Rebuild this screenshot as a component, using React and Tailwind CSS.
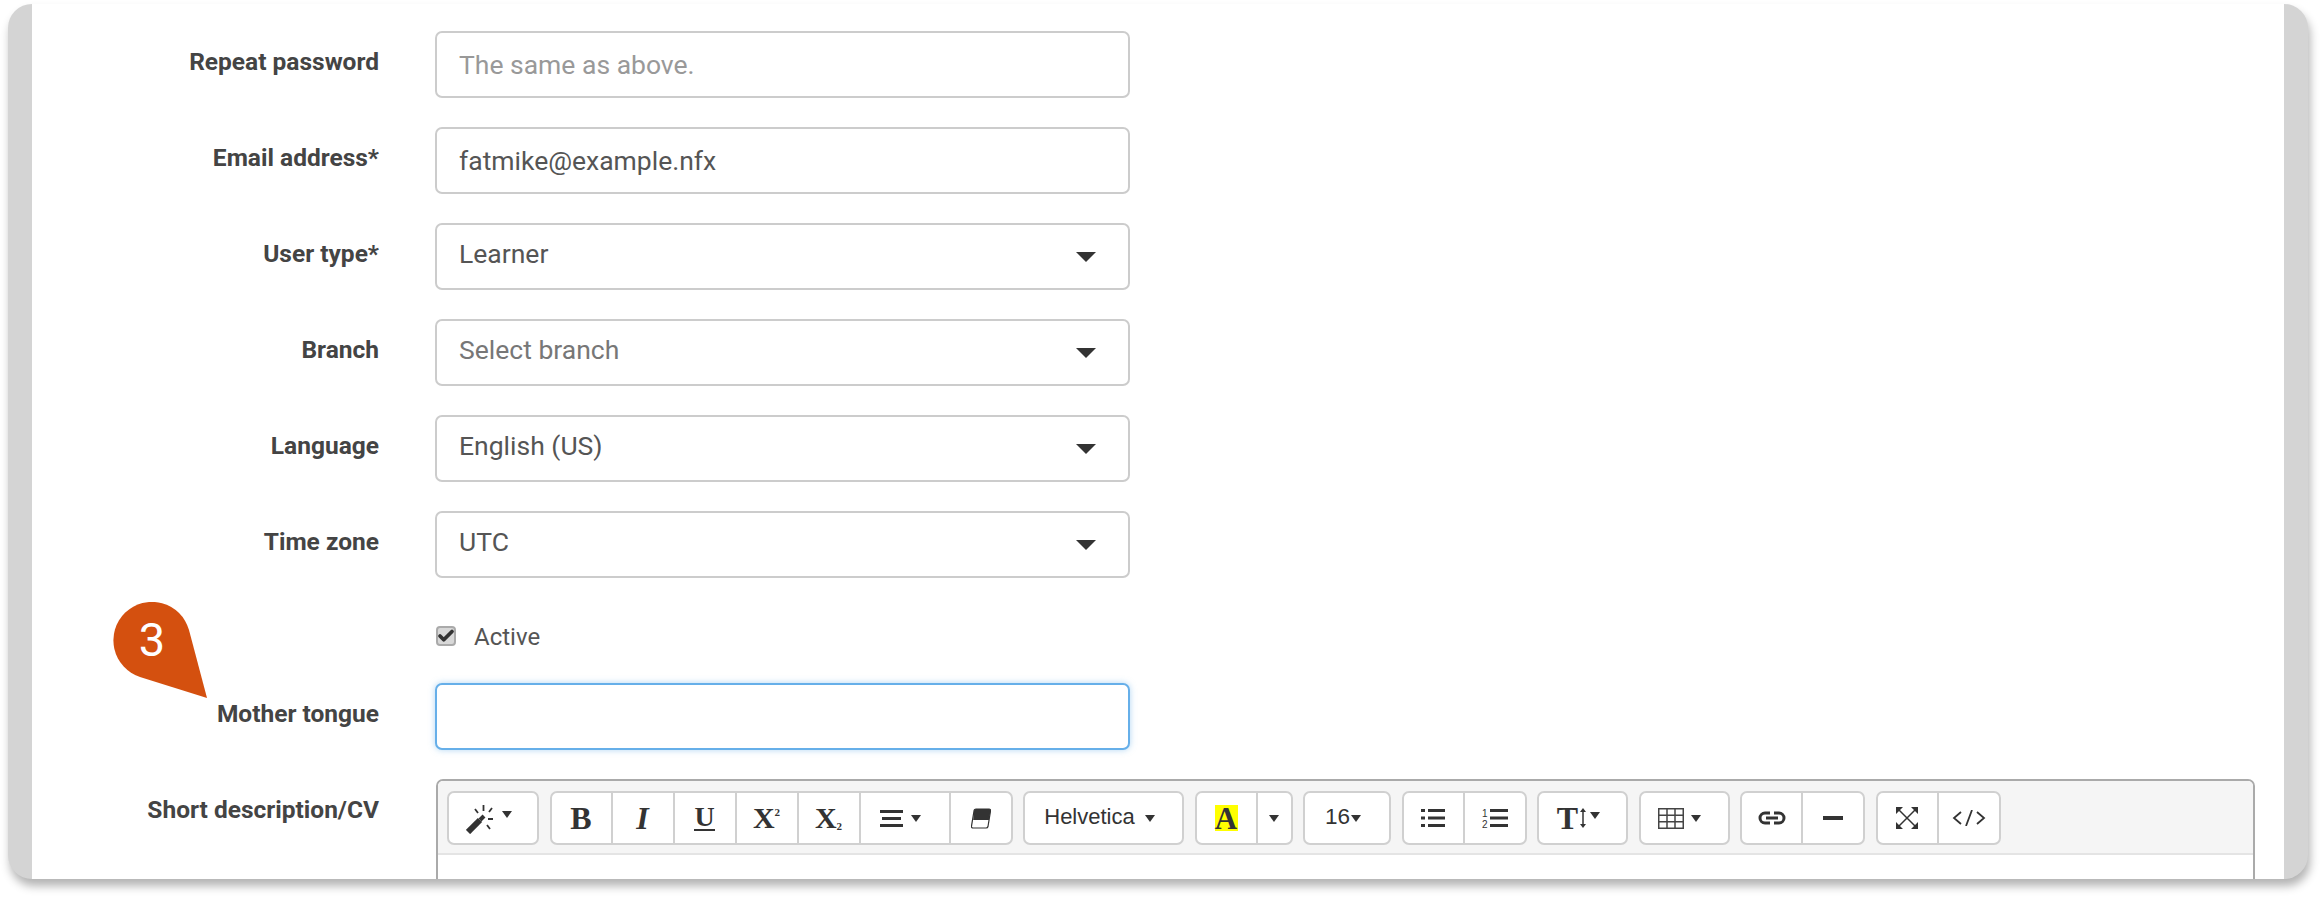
import { Check } from 'lucide-react';

const roboto = "font-['Roboto',sans-serif]";

function Caret({ className = '' }) {
  return (
    <svg width="10" height="7" viewBox="0 0 10 7" className={className}>
      <path d="M0 0h10L5 7z" fill="#333" />
    </svg>
  );
}

function Row({ label, children, className = 'mb-[29px]' }) {
  return (
    <div className={`flex h-[67px] items-center gap-[56px] ${className}`}>
      <label className="w-[347px] pb-[6px] text-right text-[24.5px] font-bold leading-8 text-[#444]">{label}</label>
      {children}
    </div>
  );
}

function TextField({ value, placeholder, focused }) {
  return (
    <input
      readOnly
      value={value}
      placeholder={placeholder}
      className={`h-[67px] w-[695px] rounded-[7px] border-2 bg-white px-[22px] pb-[1px] text-[26.5px] text-[#555] outline-none placeholder:text-[#999] ${
        focused ? 'border-[#66afe9] shadow-[0_0_6px_rgba(102,175,233,0.5)]' : 'border-[#ccc]'
      }`}
    />
  );
}

function SelectField({ value, muted }) {
  return (
    <div className={`flex h-[67px] w-[695px] items-center justify-between rounded-[7px] border-2 border-[#ccc] bg-white pl-[22px] pr-[32px] text-[26.5px] ${muted ? 'text-[#777]' : 'text-[#555]'}`}>
      <span className="pb-[5px]">{value}</span>
      <svg width="20" height="10" viewBox="0 0 20 10">
        <path d="M0 0h20L10 10z" fill="#333" />
      </svg>
    </div>
  );
}

// one segmented block of the editor toolbar
function Group({ children }) {
  return <div className="flex h-[54px] rounded-[7px] border-2 border-[#d0d0d0] bg-white text-[#333]">{children}</div>;
}

function Btn({ w, last, className = 'justify-center', children }) {
  return (
    <div style={{ width: w }} className={`flex shrink-0 items-center ${className} ${last ? '' : 'border-r-2 border-[#d0d0d0]'}`}>
      {children}
    </div>
  );
}

const serif = "font-['Liberation_Serif',serif] font-bold";

function Toolbar() {
  return (
    <div className="flex h-[74px] gap-[10.5px] border-b-2 border-[#e4e4e4] bg-[#f5f5f5] pl-[9px] pt-[10px]">
      <Group>
        <Btn w={88} last className="justify-center pr-2">
          <svg width="28" height="30" viewBox="0 0 28 30" className="mr-[8px] mt-[2px]">
            <path d="M2 28 14 16" stroke="#333" strokeWidth="6" />
            <path d="M14 16 18 12" stroke="#333" strokeWidth="4" />
            <path d="M17.500 1v6M9 5l3 4M26 4l-3 4M22 15h5M21 21l3 4" stroke="#333" strokeWidth="1.800" fill="none" />
          </svg>
          <Caret className="-mt-[8px]" />
        </Btn>
      </Group>
      <Group>
        <Btn w={61}><span className={`${serif} text-[32px] leading-none`}>B</span></Btn>
        <Btn w={62}><span className={`${serif} text-[32px] italic leading-none`}>I</span></Btn>
        <Btn w={62}><span className={`${serif} border-b-2 border-[#333] text-[28px] leading-[24px]`}>U</span></Btn>
        <Btn w={62}>
          <span className={`${serif} text-[30px] leading-none`}>X</span>
          <span className={`${serif} -mt-[12px] text-[11px] leading-none`}>2</span>
        </Btn>
        <Btn w={62}>
          <span className={`${serif} text-[30px] leading-none`}>X</span>
          <span className={`${serif} mt-[16px] text-[11px] leading-none`}>2</span>
        </Btn>
        <Btn w={90} className="justify-center pr-2">
          <svg width="23" height="17" viewBox="0 0 23 17" className="mr-[8px]">
            <path d="M0 0h23v3H0zM2 7h19v3H2zM0 14h23v3H0z" fill="#333" />
          </svg>
          <Caret />
        </Btn>
        <Btn w={60} last>
          <svg width="20" height="21" viewBox="0 0 20 21">
            <path d="M5 1h13a1.500 1.500 0 0 1 1.500 2L17 18.500a2 2 0 0 1-2 1.500H2a1.500 1.500 0 0 1-1.500-2L3 3a2 2 0 0 1 2-2z" fill="#fff" stroke="#333" strokeWidth="1.200" />
            <path d="M5 1h13a1.500 1.500 0 0 1 1.500 2L18 12H2.200L3 3a2 2 0 0 1 2-2z" fill="#333" />
          </svg>
        </Btn>
      </Group>
      <Group>
        <Btn w={157} last className="justify-center pr-2">
          <span className="-mt-[3px] mr-[10px] font-['Liberation_Sans',sans-serif] text-[22px] text-[#333]">Helvetica</span>
          <Caret />
        </Btn>
      </Group>
      <Group>
        <Btn w={61}>
          <span className={`${serif} h-[26px] w-[23px] bg-[#ffff00] text-center text-[31px] leading-[27px]`}>A</span>
        </Btn>
        <Btn w={33} last><Caret /></Btn>
      </Group>
      <Group>
        <Btn w={84} last className="justify-center pr-2">
          <span className="-mt-[3px] font-['Liberation_Sans',sans-serif] text-[22.500px] text-[#333]">16</span>
          <Caret className="ml-[1px]" />
        </Btn>
      </Group>
      <Group>
        <Btn w={61}>
          <svg width="24" height="20" viewBox="0 0 24 20">
            <path d="M0 1h4v3H0zM7 1h17v3H7zM0 8.500h4v3H0zM7 8.500h17v3H7zM0 16h4v3H0zM7 16h17v3H7z" fill="#333" />
          </svg>
        </Btn>
        <Btn w={60} last>
          <svg width="26" height="22" viewBox="0 0 26 22">
            <path d="M8 2h18v3H8zM8 9.500h18v3H8zM8 17h18v3H8z" fill="#333" />
            <text x="0" y="10" fontSize="10" fontFamily="Liberation Sans" fill="#333">1</text>
            <text x="0" y="21" fontSize="10" fontFamily="Liberation Sans" fill="#333">2</text>
          </svg>
        </Btn>
      </Group>
      <Group>
        <Btn w={87} last className="justify-center pr-2">
          <span className={`${serif} text-[32px] leading-none`}>T</span>
          <svg width="8" height="22" viewBox="0 0 8 22" className="ml-[1px] mr-[3px]">
            <path d="M4 3v16" stroke="#333" strokeWidth="1.500" />
            <path d="M1 5l3-4 3 4zM1 17l3 4 3-4z" fill="#333" />
          </svg>
          <Caret className="-mt-[6px]" />
        </Btn>
      </Group>
      <Group>
        <Btn w={87} last className="justify-center pr-[10px]">
          <svg width="26" height="21" viewBox="0 0 26 21" className="mr-[7px]">
            <path d="M.75.750h24.500v19.500H.75zM.75 7.250h24.500M.75 13.750h24.500M9 .750v19.500M17 .750v19.500" fill="none" stroke="#444" strokeWidth="1.500" />
          </svg>
          <Caret />
        </Btn>
      </Group>
      <Group>
        <Btn w={61}>
          <svg width="28" height="14" viewBox="0 0 28 14">
            <path d="M12 2H7a5 5 0 0 0 0 10h5M16 2h5a5 5 0 0 1 0 10h-5M8 7h12" fill="none" stroke="#333" strokeWidth="3" />
          </svg>
        </Btn>
        <Btn w={60} last>
          <svg width="20" height="4" viewBox="0 0 20 4">
            <path d="M0 0h20v4H0z" fill="#333" />
          </svg>
        </Btn>
      </Group>
      <Group>
        <Btn w={61}>
          <svg width="22" height="22" viewBox="0 0 22 22">
            <path d="M3 3 19 19M19 3 3 19" stroke="#333" strokeWidth="1.500" />
            <path d="M0 0h7L0 7zM22 0h-7l7 7zM0 22h7l-7-7zM22 22h-7l7-7z" fill="#333" />
          </svg>
        </Btn>
        <Btn w={60} last>
          <svg width="34" height="16" viewBox="0 0 34 16">
            <path d="M9 2 2 8l7 6M25 2l7 6-7 6M20 0l-6 16" fill="none" stroke="#333" strokeWidth="1.800" />
          </svg>
        </Btn>
      </Group>
    </div>
  );
}

export default function App() {
  return (
    <div className={`relative h-[899px] overflow-hidden bg-white pb-5 pl-2 pr-4 pt-1 ${roboto}`}>
      <div className="h-[875px] rounded-3xl bg-[#d4d4d4] px-6 shadow-[2px_7px_10px_rgba(0,0,0,0.3)]">
        <div className="h-full overflow-hidden bg-white pt-[27px]">
          <Row label="Repeat password"><TextField value="" placeholder="The same as above." /></Row>
          <Row label="Email address*"><TextField value="fatmike@example.nfx" /></Row>
          <Row label="User type*"><SelectField value="Learner" /></Row>
          <Row label="Branch"><SelectField value="Select branch" muted /></Row>
          <Row label="Language"><SelectField value="English (US)" /></Row>
          <Row label="Time zone"><SelectField value="UTC" /></Row>

          <div className="mb-[18px] ml-[404px] flex h-[58px] items-center gap-[18px]">
            <span className="flex size-5 items-center justify-center rounded-[4px] border-2 border-[#aaa] bg-[#d8d8d8]">
              <Check size={18} strokeWidth={5} className="shrink-0 text-[#333]" />
            </span>
            <span className="pt-[1px] text-[24px] text-[#555]">Active</span>
          </div>

          <Row label="Mother tongue" className="mb-[29px]"><TextField value="" focused /></Row>

          <div className="flex items-start gap-[57px]">
            <label className="w-[347px] pt-[15px] text-right text-[24.5px] font-bold leading-8 text-[#444]">Short description/CV</label>
            <div className="h-[200px] w-[1819px] rounded-t-[7px] border-2 border-[#aaa]">
              <div className="overflow-hidden rounded-t-[5px]">
                <Toolbar />
              </div>
            </div>
          </div>
        </div>
      </div>

      {/* numbered callout */}
      <div className="absolute left-[113px] top-[602px]">
        <div className="relative h-[97px] w-[95px]">
          <svg width="95" height="97" viewBox="0 0 95 97" className="absolute inset-0">
            <path d="M76 28 94 96 27 75A38.500 38.500 0 1 1 76 28Z" fill="#d4500f" />
          </svg>
          <span className="absolute left-0 top-[8px] w-[78px] text-center text-[47px] font-normal leading-[60px] text-white">3</span>
        </div>
      </div>
    </div>
  );
}
